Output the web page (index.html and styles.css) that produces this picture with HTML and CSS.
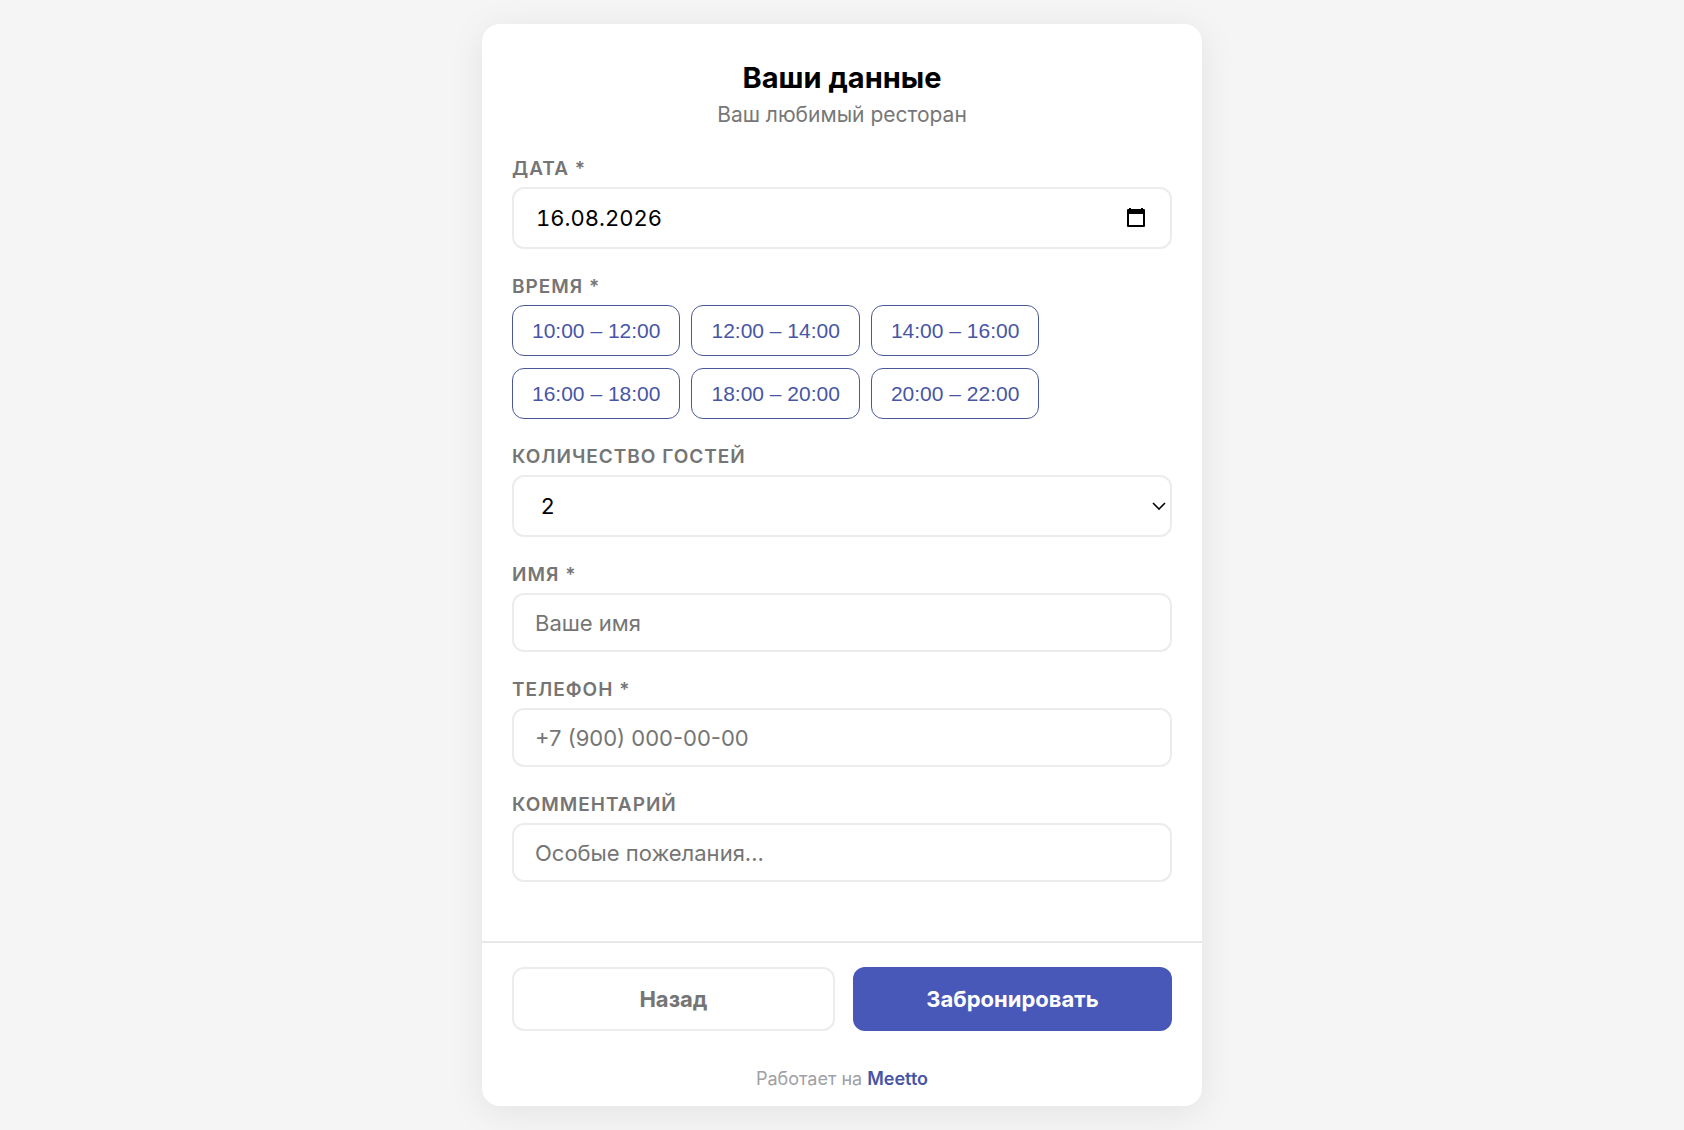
FILE: index.html
```html
<!DOCTYPE html>
<html lang="ru">
<head>
    <meta charset="UTF-8">
    <meta name="viewport" content="width=device-width, initial-scale=1">
    <title>Ваши данные</title>
    <link rel="stylesheet" href="styles.css">
</head>
<body>

<form class="card">

    <div class="card-body">
        <header class="card-header">
            <h1>Ваши данные</h1>
            <p>Ваш любимый ресторан</p>
        </header>

        <div class="field">
            <label for="date">Дата *</label>
            <div class="control date-control">
                <input type="text" id="date" value="16.08.2026" inputmode="numeric" required>
                <button type="button" class="calendar-button" aria-label="Открыть календарь">
                    <svg width="20" height="22" viewBox="0 0 20 22">
                        <path fill-rule="evenodd" d="M3 1h2v1h10V1h2v1h1a1 1 0 0 1 1 1v16a1 1 0 0 1-1 1H2a1 1 0 0 1-1-1V3a1 1 0 0 1 1-1h1zM3 7v11h14V7z"/>
                    </svg>
                </button>
            </div>
        </div>

        <fieldset class="field">
            <legend>Время *</legend>
            <div class="slots">
                <button type="button" class="slot">10:00 – 12:00</button>
                <button type="button" class="slot">12:00 – 14:00</button>
                <button type="button" class="slot">14:00 – 16:00</button>
                <button type="button" class="slot">16:00 – 18:00</button>
                <button type="button" class="slot">18:00 – 20:00</button>
                <button type="button" class="slot">20:00 – 22:00</button>
            </div>
        </fieldset>

        <div class="field">
            <label for="guests">Количество гостей</label>
            <div class="select-wrapper">
                <select id="guests" class="control">
                    <option>1</option>
                    <option selected>2</option>
                    <option>3</option>
                    <option>4</option>
                    <option>5</option>
                    <option>6</option>
                </select>
                <svg class="arrow" width="14" height="10" viewBox="0 0 14 10">
                    <path d="M1 2l6 6 6-6" fill="none" stroke="#000" stroke-width="1.6"/>
                </svg>
            </div>
        </div>

        <div class="field">
            <label for="name">Имя *</label>
            <input type="text" id="name" class="control" placeholder="Ваше имя" required>
        </div>

        <div class="field">
            <label for="phone">Телефон *</label>
            <input type="tel" id="phone" class="control" placeholder="+7 (900) 000-00-00" required>
        </div>

        <div class="field">
            <label for="comment">Комментарий</label>
            <input type="text" id="comment" class="control" placeholder="Особые пожелания...">
        </div>
    </div>

    <div class="actions">
        <button type="button" class="btn btn-back">Назад</button>
        <button type="submit" class="btn btn-primary">Забронировать</button>
    </div>

    <footer class="powered">Работает на <a href="#">Meetto</a></footer>

</form>

</body>
</html>
```
FILE: styles.css
```css
* {
    box-sizing: border-box;
    margin: 0;
    padding: 0;
}
body {
    font-family: Inter, "Liberation Sans", sans-serif;
    background: #f5f5f5;
    padding: 24px;
    color: #000;
}
.card {
    max-width: 720px;
    margin: 0 auto;
    background: #fff;
    border-radius: 18px;
    box-shadow: 0 6px 36px rgba(0, 0, 0, 0.08);
}
.card-body {
    padding: 36px 30px 59px;
}
.card-header {
    text-align: center;
    margin-bottom: 27px;
}
.card-header h1 {
    font-size: 29px;
    line-height: 36px;
    font-weight: 700;
}
.card-header p {
    font-size: 21px;
    line-height: 30px;
    margin-top: 4px;
    color: #777;
}

/* Поля формы */
.field {
    border: none;
    margin-bottom: 26px;
}
.field:last-child {
    margin-bottom: 0;
}
.field label,
.field legend {
    display: block;
    font-size: 19px;
    line-height: 24px;
    font-weight: 600;
    letter-spacing: 1px;
    text-transform: uppercase;
    color: #757575;
    margin-bottom: 6px;
}
.control {
    display: block;
    width: 100%;
    height: 59px;
    padding: 0 21px;
    border: 2px solid #ececec;
    border-radius: 12px;
    background: #fff;
    font-family: inherit;
    font-size: 22px;
    color: #000;
    outline: none;
}
.control::placeholder {
    color: #757575;
}
.date-control {
    display: flex;
    align-items: center;
    height: 62px;
    padding-left: 22px;
}
.date-control input {
    flex: 1;
    min-width: 0;
    border: none;
    outline: none;
    background: none;
    font: inherit;
    font-variant-numeric: tabular-nums;
    color: inherit;
}
.calendar-button {
    border: none;
    background: none;
    padding: 0 3px;
    cursor: pointer;
}
.calendar-button svg {
    display: block;
}
.select-wrapper {
    position: relative;
}
select.control {
    height: 62px;
    padding: 0 27px;
    appearance: none;
}
.arrow {
    position: absolute;
    right: 6px;
    top: 26px;
    pointer-events: none;
}

/* Время */
.slots {
    display: flex;
    flex-wrap: wrap;
    gap: 12px 11px;
}
.slot {
    height: 51px;
    padding: 0 19px;
    border: 1px solid #4a5899;
    border-radius: 12px;
    background: #fff;
    font-family: "Liberation Sans", Arial, sans-serif;
    font-size: 21px;
    color: #4855a5;
    cursor: pointer;
}

/* Кнопки */
.actions {
    display: flex;
    gap: 18px;
    padding: 24px 30px;
    border-top: 2px solid #e8e8e8;
}
.btn {
    flex: 1;
    height: 64px;
    border: none;
    border-radius: 12px;
    font-family: inherit;
    font-size: 22px;
    font-weight: 700;
    cursor: pointer;
}
.btn-back {
    border: 2px solid #ececec;
    background: #fff;
    color: #757575;
}
.btn-primary {
    background: #4858b8;
    color: #fff;
}
.powered {
    padding: 12px 30px 15px;
    text-align: center;
    font-size: 18px;
    line-height: 24px;
    color: #a0a0a5;
}
.powered a {
    color: #4855a5;
    font-weight: 600;
    text-decoration: none;
}
```
